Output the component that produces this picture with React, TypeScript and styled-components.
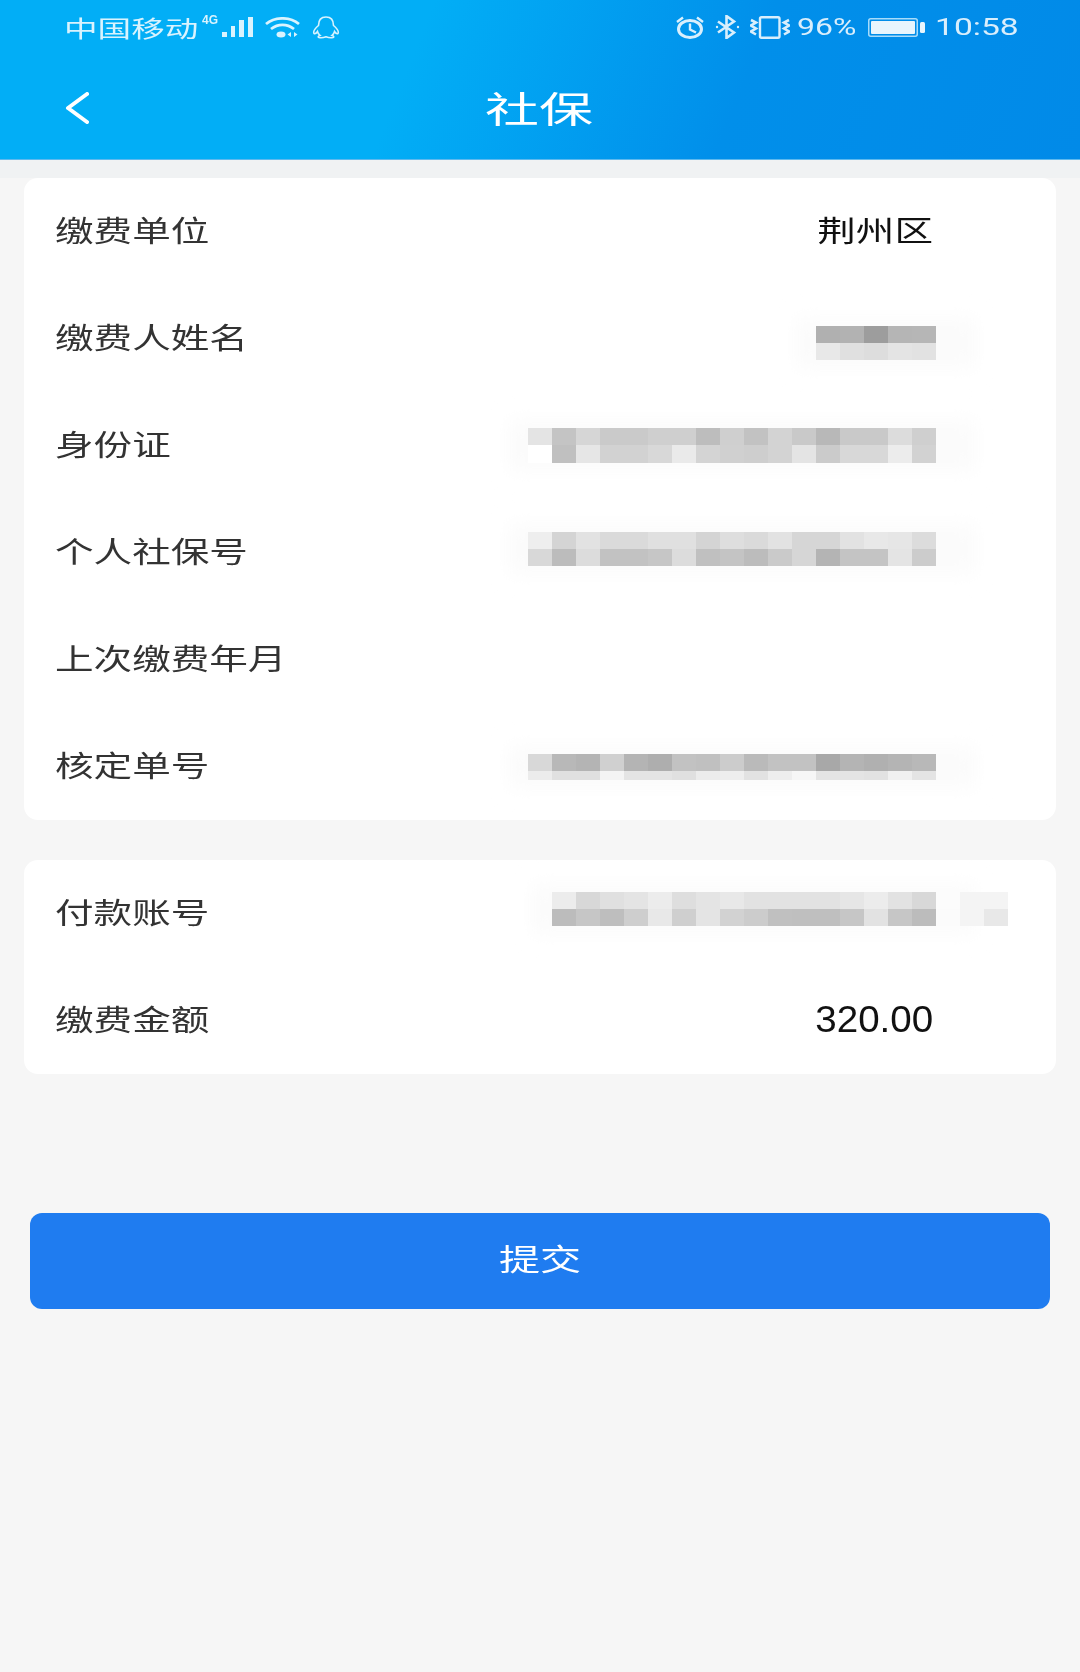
import React from 'react';
import styled, {createGlobalStyle} from 'styled-components';

const CJK = `"Noto Sans CJK SC", "Liberation Sans", sans-serif`;

type MosaicT = {rows: string[][]; heights: number[]; offset?: number; faint?: string[][]};

const rowsData: {label: string; value?: string; mosaic?: MosaicT; isNumber?: boolean}[][] = [
  [
    {label: '缴费单位', value: '荆州区'},
    {
      label: '缴费人姓名',
      mosaic: {
        heights: [17, 17],
        offset: 14,
        rows: [
          ['b0', 'b2', '9d', 'b5', 'b6'],
          ['e8', 'e0', 'dd', 'e4', 'e2'],
        ],
      },
    },
    {
      label: '身份证',
      mosaic: {
        heights: [17, 18],
        offset: 4,
        rows: [
          ['e4', 'c4', 'd6', 'ca', 'ca', 'cf', 'cf', 'bd', 'cf', 'c2', 'd3', 'c9', 'b8', 'c9', 'c9', 'dc', 'cf'],
          ['ff', 'c0', 'e6', 'd2', 'd2', 'd8', 'ea', 'd4', 'd0', 'ce', 'd3', 'e4', 'cb', 'd8', 'd8', 'ec', 'd2'],
        ],
      },
    },
    {
      label: '个人社保号',
      mosaic: {
        heights: [17, 17],
        offset: -2,
        rows: [
          ['ee', 'd4', 'e2', 'da', 'da', 'e0', 'e0', 'd4', 'de', 'da', 'e2', 'd6', 'd6', 'e2', 'e8', 'e6', 'dc'],
          ['d8', 'bc', 'dc', 'c2', 'c2', 'c6', 'dc', 'c0', 'c4', 'bc', 'ca', 'd6', 'b4', 'c4', 'c4', 'e4', 'cc'],
        ],
      },
    },
    {label: '上次缴费年月'},
    {
      label: '核定单号',
      mosaic: {
        heights: [17, 9],
        offset: 6,
        rows: [
          ['d8', 'b8', 'b4', 'd0', 'b4', 'ae', 'c2', 'c0', 'cc', 'ba', 'c2', 'c2', 'a8', 'b4', 'b0', 'b4', 'b8'],
          ['ec', 'e0', 'e0', 'f4', 'e4', 'e4', 'e0', 'ec', 'ee', 'e2', 'ee', 'f6', 'e4', 'e4', 'e2', 'f0', 'e4'],
        ],
      },
    },
  ],
  [
    {
      label: '付款账号',
      mosaic: {
        heights: [17, 17],
        offset: -4,
        rows: [
          ['ec', 'd8', 'e0', 'e4', 'ec', 'de', 'e4', 'e8', 'e2', 'e2', 'e2', 'e2', 'e6', 'ec', 'e2', 'd8'],
          ['bc', 'c6', 'be', 'ce', 'e8', 'cf', 'e4', 'd2', 'cc', 'c0', 'bf', 'bf', 'c6', 'e2', 'c6', 'bc'],
        ],
        faint: [
          ['fc', 'f4', 'f4'],
          ['fb', 'f4', 'e8'],
        ],
      },
    },
    {label: '缴费金额', value: '320.00', isNumber: true},
  ],
];

const CELL = 24;

const Mosaic = ({data}: {data: MosaicT}) => {
  const cols = data.rows[0].length;
  const width = cols * CELL;
  const height = data.heights[0] + data.heights[1];
  return (
    <MosaicBox $offset={data.offset || 0} style={{width, height}}>
      <svg width={width} height={height} style={{overflow: 'visible', display: 'block'}}>
        <defs>
          <filter id="smudge" x="-20%" y="-100%" width="140%" height="300%">
            <feGaussianBlur stdDeviation="10" />
          </filter>
        </defs>
        <rect x={-20} y={-8} width={width + 60} height={height + 16} fill="#fbfbfb" filter="url(#smudge)" />
        {data.rows.map((row, r) =>
          row.map((shade, c) => (
            <rect
              key={`${r}-${c}`}
              x={c * CELL}
              y={r === 0 ? 0 : data.heights[0]}
              width={CELL}
              height={data.heights[r]}
              fill={`#${shade}${shade}${shade}`}
            />
          )),
        )}
        {data.faint &&
          data.faint.map((row, r) =>
            row.map((shade, c) => (
              <rect
                key={`f-${r}-${c}`}
                x={width + c * CELL}
                y={r === 0 ? 0 : data.heights[0]}
                width={CELL}
                height={data.heights[r]}
                fill={`#${shade}${shade}${shade}`}
              />
            )),
          )}
      </svg>
    </MosaicBox>
  );
};

const StatusIcons = {
  signal: (
    <svg width="33" height="20" viewBox="0 0 33 20" fill="currentColor">
      <rect x="0" y="15" width="5" height="5" />
      <rect x="9" y="9" width="4" height="11" />
      <rect x="17" y="3" width="5" height="17" />
      <rect x="26" y="0" width="5" height="20" />
    </svg>
  ),
  wifi: (
    <svg width="35" height="21" viewBox="0 0 35 21" fill="none" stroke="currentColor" strokeWidth="2.800">
      <path d="M1 7C10 -0.500 25 -0.500 34 7" />
      <path d="M6 12C13 6.500 22 6.500 29 12" />
      <ellipse cx="16" cy="17.500" rx="4.500" ry="3" fill="currentColor" stroke="none" />
      <path d="M26 15v5l-3.500-2.500zM29 15v5l3.500-2.500z" fill="currentColor" stroke="none" />
    </svg>
  ),
  qq: (
    <svg width="28" height="23" viewBox="0 0 28 23" fill="none" stroke="currentColor" strokeWidth="1.600">
      <path d="M14 1C8.500 1 6.500 5 6.500 9.500C3.500 12 1 15.500 2 17.500C3 18 4.500 17 5.500 15.500C6 17.500 7 18.800 8 19.500C6.500 20 5.500 21 7 21.500C9.500 22 12 21.500 14 20.800C16 21.500 18.500 22 21 21.500C22.500 21 21.500 20 20 19.500C21 18.800 22 17.500 22.500 15.500C23.500 17 25 18 26 17.500C27 15.500 24.500 12 21.500 9.500C21.500 5 19.500 1 14 1Z" />
    </svg>
  ),
  alarm: (
    <svg width="30" height="23" viewBox="0 0 30 23" fill="none" stroke="currentColor" strokeWidth="3">
      <ellipse cx="15" cy="13" rx="11.500" ry="8.500" />
      <path d="M15 7.500V13.500L21 16.500" strokeWidth="2.400" />
      <path d="M2 6L8 1.500M28 6L22 1.500" strokeWidth="2.400" />
    </svg>
  ),
  bluetooth: (
    <svg width="25" height="24" viewBox="0 0 25 24" fill="none" stroke="currentColor" strokeWidth="2.600">
      <path d="M3 6.500L19 17.500L11.500 23V1L19 6.500L3 17.500" />
      <circle cx="2" cy="12" r="1.200" fill="currentColor" stroke="none" />
      <circle cx="23" cy="12" r="1.200" fill="currentColor" stroke="none" />
    </svg>
  ),
  vibrate: (
    <svg width="40" height="23" viewBox="0 0 40 23" fill="none" stroke="currentColor" strokeWidth="2.600">
      <rect x="10" y="1.200" width="19.500" height="20.600" rx="1.500" strokeWidth="2.400" />
      <path d="M1 4L6 6.500L1 9.500L6 12.500L1 15.500L6 18.500" />
      <path d="M39 4L34 6.500L39 9.500L34 12.500L39 15.500L34 18.500" />
    </svg>
  ),
  battery: (
    <svg width="57" height="19" viewBox="0 0 57 19">
      <rect x="0.750" y="0.750" width="48.500" height="17.500" rx="2" fill="none" stroke="#a8dcfa" strokeWidth="1.500" />
      <rect x="3" y="3" width="44" height="13" rx="1" fill="#e8f5fd" />
      <rect x="52" y="4" width="5" height="11" rx="1.500" fill="#e8f5fd" />
    </svg>
  ),
};

const App = () => (
  <Page>
    <GlobalStyle />
    <Header>
      <StatusBar>
        <StatusGroup>
          <Carrier>
            <span>中国移动</span>
          </Carrier>
          <Network>4G</Network>
          <IconSlot>{StatusIcons.signal}</IconSlot>
          <WideSlot>{StatusIcons.wifi}</WideSlot>
          <QQSlot>{StatusIcons.qq}</QQSlot>
        </StatusGroup>
        <StatusGroup>
          <IconSlot>{StatusIcons.alarm}</IconSlot>
          <WideSlot>{StatusIcons.bluetooth}</WideSlot>
          <WideSlot>{StatusIcons.vibrate}</WideSlot>
          <Percent>
            <span>96%</span>
          </Percent>
          <BatterySlot>{StatusIcons.battery}</BatterySlot>
          <Clock>
            <span>10:58</span>
          </Clock>
        </StatusGroup>
      </StatusBar>
      <NavBar>
        <BackButton>
          <svg width="24" height="32" viewBox="0 0 24 32" fill="none" stroke="#fff" strokeWidth="4" strokeLinecap="round" strokeLinejoin="round">
            <path d="M22 2L3 16L22 30" />
          </svg>
        </BackButton>
        <Title>社保</Title>
      </NavBar>
    </Header>
    <Main>
      {rowsData.map((card, i) => (
        <Card key={i}>
          {card.map((row) => (
            <Row key={row.label}>
              <Label>{row.label}</Label>
              {row.value && <Value $number={row.isNumber}>{row.value}</Value>}
              {row.mosaic && <Mosaic data={row.mosaic} />}
            </Row>
          ))}
        </Card>
      ))}
      <SubmitButton>
        <span>提交</span>
      </SubmitButton>
    </Main>
  </Page>
);

const GlobalStyle = createGlobalStyle`
  html, body {
    margin: 0;
    padding: 0;
    background: #f5f5f5;
  }
  * {
    box-sizing: border-box;
  }
`;

const Page = styled.div`
  width: 1080px;
  height: 1672px;
  overflow: hidden;
  background: #f6f6f6;
  font-family: ${CJK};
  filter: blur(0.5px);
`;

const Header = styled.header`
  height: 160px;
  background: linear-gradient(112deg, #02aef6 0%, #02aef6 38%, #018fea 68%, #018ae8 100%);
  border-bottom: 1px solid #5fb9ee;
  color: rgba(255, 255, 255, 0.85);
`;

const StatusBar = styled.div`
  height: 54px;
  padding: 0 62px 0 64px;
  display: flex;
  align-items: center;
  justify-content: space-between;
`;

const StatusGroup = styled.div`
  display: flex;
  align-items: center;
`;

const IconSlot = styled.div`
  display: flex;
  align-items: center;
`;

const WideSlot = styled(IconSlot)`
  margin-left: 10px;
`;

const QQSlot = styled(IconSlot)`
  margin-left: 12px;
`;

const BatterySlot = styled(IconSlot)`
  margin-left: 11px;
`;

const StatusText = styled.div`
  white-space: nowrap;
  line-height: 30px;

  span {
    display: inline-block;
    transform-origin: left center;
  }
`;

const Carrier = styled(StatusText)`
  width: 133px;
  font-size: 23px;

  span {
    transform: scaleX(1.46);
  }
`;

const Network = styled.div`
  width: 20px;
  margin-left: 5px;
  margin-bottom: 14px;
  font-family: "Liberation Sans", sans-serif;
  font-size: 12px;
  line-height: 10px;
  font-weight: 700;
  white-space: nowrap;
`;

const Percent = styled(StatusText)`
  width: 60px;
  margin-left: 7px;
  font-family: Roboto, "Liberation Sans", sans-serif;
  font-size: 24px;

  span {
    transform: scaleX(1.33);
  }
`;

const Clock = styled(StatusText)`
  width: 83px;
  margin-left: 10px;
  font-family: Roboto, "Liberation Sans", sans-serif;
  font-size: 24px;

  span {
    transform: scaleX(1.4);
  }
`;

const NavBar = styled.div`
  height: 105px;
  padding-left: 65px;
  display: grid;
  grid-template-columns: 438px 1fr;
  align-items: center;
`;

const BackButton = styled.div`
  display: flex;
  align-items: center;
  margin-top: 3px;
`;

const Title = styled.h1`
  margin: 0;
  width: 72px;
  font-size: 36px;
  line-height: 48px;
  font-weight: 400;
  color: #fff;
  white-space: nowrap;
  transform: scaleX(1.5);
  transform-origin: center;
`;

const Main = styled.main`
  padding: 18px 24px 0;
  background: linear-gradient(#f0f2f3 18px, #f6f6f6 18px);
  display: flex;
  flex-direction: column;
  gap: 40px;
`;

const Card = styled.section`
  background: #fff;
  border-radius: 14px;
`;

const Row = styled.div`
  height: 107px;
  padding: 0 120px 5px 31px;
  display: flex;
  align-items: center;
  justify-content: space-between;
`;

const Label = styled.div`
  font-size: 29px;
  line-height: 40px;
  color: #333;
  white-space: nowrap;
  transform: scaleX(1.33);
  transform-origin: left center;
`;

const Value = styled.div<{$number?: boolean}>`
  margin-right: 3px;
  margin-top: ${({$number}) => ($number ? '4px' : '0')};
  font-family: ${({$number}) => ($number ? `"Liberation Sans", sans-serif` : CJK)};
  font-size: ${({$number}) => ($number ? '36px' : '29px')};
  line-height: 40px;
  color: #111;
  white-space: nowrap;
  transform: scaleX(${({$number}) => ($number ? 1.07 : 1.33)});
  transform-origin: right center;
`;

const MosaicBox = styled.div<{$offset: number}>`
  flex: none;
  margin-top: ${({$offset}) => $offset}px;
`;

const SubmitButton = styled.button`
  margin: 99px 6px 0;
  height: 96px;
  border: none;
  border-radius: 12px;
  background: #1f7cf0;
  color: #fff;
  font-family: ${CJK};
  font-size: 30px;
  padding: 0 0 8px;

  span {
    display: inline-block;
    transform: scaleX(1.37);
  }
`;

export default App;
